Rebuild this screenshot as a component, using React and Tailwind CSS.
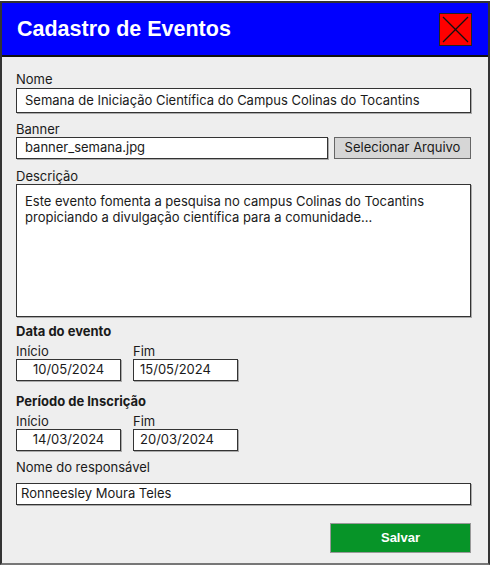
import React from "react";

const inputBox =
	"bg-white border border-[#333] shadow-[1px_1px_0_#aaa] flex items-center text-[13px] text-[#1a1a1a]";

const Label = ({ children, className = "" }) => (
	<div className={"text-[13px] leading-4 text-[#1a1a1a] " + className}>{children}</div>
);

export default function App() {
	return (
		<div className="w-[491px] h-[567px] bg-white pt-px" style={{ fontFamily: "Inter, 'Noto Sans', sans-serif" }}>
			<div className="w-[490px] h-[564px] border-2 border-[#333] border-b-[#777] bg-[#eeeeee] flex flex-col">
				{/* Header */}
				<div className="h-[54px] bg-[#0000ff] border-b-2 border-[#111] flex items-center justify-between pl-[15px] pr-[16px] shrink-0">
					<h1
						className="text-white font-bold text-[21.5px]"
						style={{ fontFamily: "'Liberation Sans', Arial, sans-serif" }}
					>
						Cadastro de Eventos
					</h1>
					<button className="w-[33px] h-[33px] bg-[#ff0000] border border-[#222] flex items-center justify-center">
						<svg width="31" height="31" viewBox="0 0 31 31">
							<line x1="3" y1="3" x2="28" y2="28" stroke="#111" strokeWidth="1.2" />
							<line x1="28" y1="3" x2="3" y2="28" stroke="#111" strokeWidth="1.2" />
						</svg>
					</button>
				</div>

				{/* Form */}
				<div className="flex flex-col pl-[14px] pr-[17px] pt-[14px]">
					<Label className="mb-[1px]">Nome</Label>
					<div className={inputBox + " h-[25px] px-2"}>
						Semana de Iniciação Científica do Campus Colinas do Tocantins
					</div>

					<Label className="mt-2">Banner</Label>
					<div className="flex gap-[6px]">
						<div className={inputBox + " h-[22px] px-2 w-[312px]"}>banner_semana.jpg</div>
						<button className="flex-1 h-[22px] bg-[#d6d6d6] border border-[#666] text-[13px] text-[#1a1a1a]">
							Selecionar Arquivo
						</button>
					</div>

					<Label className="mt-[9px]">Descrição</Label>
					<div className="h-[133px] bg-white border border-[#333] shadow-[1px_1px_0_#aaa] px-2 pt-[8px] text-[13px] leading-4 text-[#1a1a1a]">
						Este evento fomenta a pesquisa no campus Colinas do Tocantins
						<br />
						propiciando a divulgação científica para a comunidade...
					</div>

					<Label className="mt-[6px] font-bold">Data do evento</Label>
					<div className="flex gap-3 mt-[4px]">
						<div className="w-[105px]">
							<Label>Início</Label>
							<div className={inputBox + " h-[22px] justify-center"}>10/05/2024</div>
						</div>
						<div className="w-[105px]">
							<Label>Fim</Label>
							<div className={inputBox + " h-[22px] px-[6px]"}>15/05/2024</div>
						</div>
					</div>

					<Label className="mt-[12px] font-bold">Período de Inscrição</Label>
					<div className="flex gap-3 mt-[4px]">
						<div className="w-[105px]">
							<Label>Início</Label>
							<div className={inputBox + " h-[22px] justify-center"}>14/03/2024</div>
						</div>
						<div className="w-[105px]">
							<Label>Fim</Label>
							<div className={inputBox + " h-[22px] px-[6px]"}>20/03/2024</div>
						</div>
					</div>

					<Label className="mt-2 mb-[8px]">Nome do responsável</Label>
					<div className={inputBox + " h-[22px] px-1"}>Ronneesley Moura Teles</div>

					<div className="flex justify-end mt-[18px]">
						<button
							className="w-[141px] h-[30px] bg-[#079428] border border-[#999] text-white font-bold text-[13px]"
							style={{ fontFamily: "'Liberation Sans', Arial, sans-serif" }}
						>
							Salvar
						</button>
					</div>
				</div>
			</div>
		</div>
	);
}
